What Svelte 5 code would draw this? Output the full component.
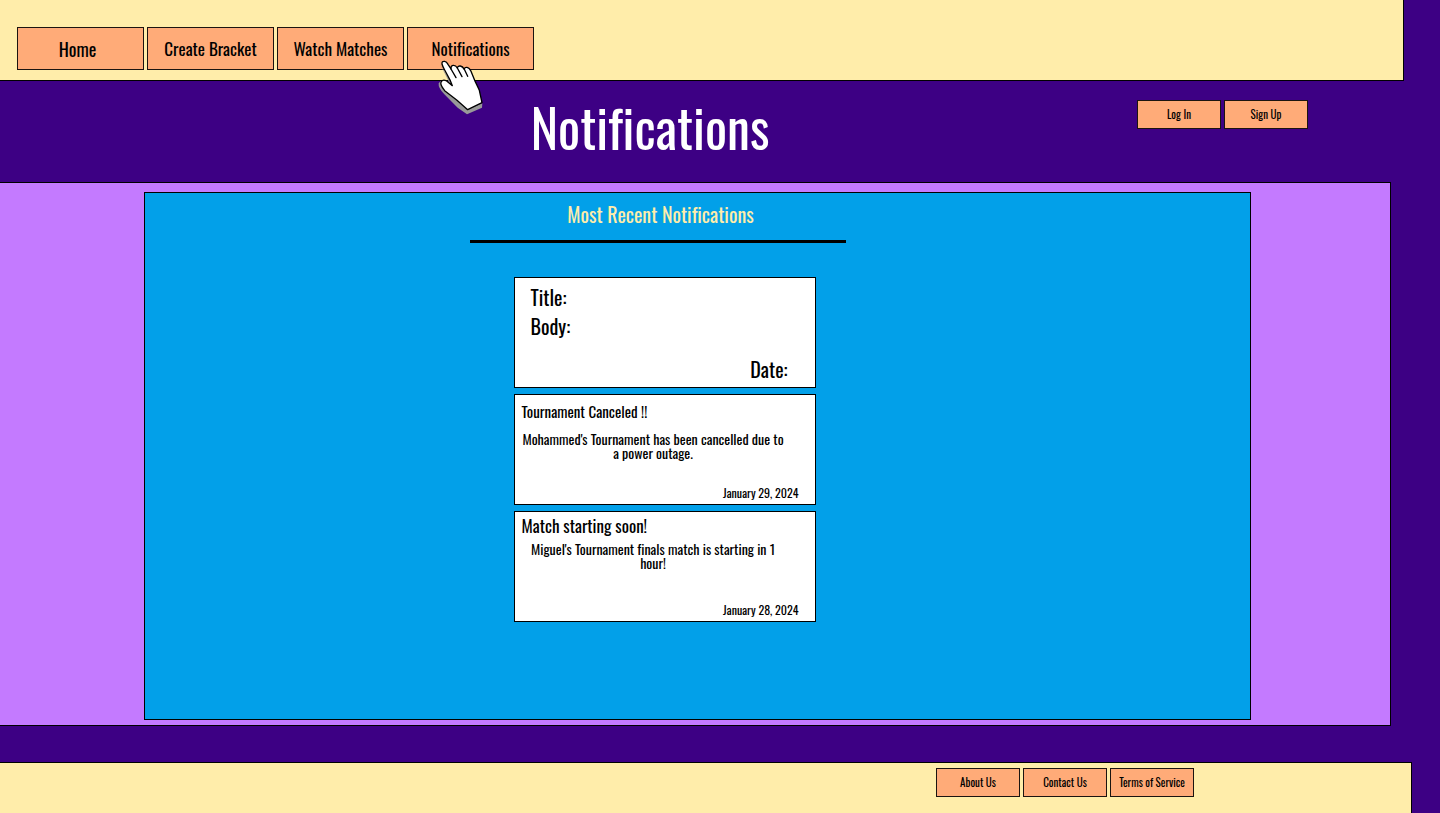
<script>
  const pages = ['Home', 'Create Bracket', 'Watch Matches', 'Notifications'];
  const account = ['Log In', 'Sign Up'];
  const info = ['About Us', 'Contact Us', 'Terms of Service'];
  const notifications = [
    {
      size: 'medium',
      title: 'Tournament Canceled !!',
      body: "Mohammed's Tournament has been cancelled due to a power outage.",
      date: 'January 29, 2024'
    },
    {
      size: 'large',
      title: 'Match starting soon!',
      body: "Miguel's Tournament finals match is starting in 1 hour!",
      date: 'January 28, 2024'
    }
  ];
</script>

<div class="page">
  <header class="topbar">
    <nav class="buttons">
      {#each pages as name}
        <div class="slot">
          <button class="nav-button" class:home={name === 'Home'}>{name}</button>
          {#if name === 'Notifications'}
            <svg class="pointer" viewBox="36 24 138 174" aria-hidden="true">
              <path
                d="M46 44 L68 88 L76 110 L62 96 Q48 88 41 100 Q39 114 58 133 L98 173 L126 193 L171 173 L172 160 L128 178 Z"
                fill="#999" />
              <path
                d="M51 42 Q50 33 59 34 Q65 35 69 43 L78 57 Q77 47 84 46 Q92 45 97 54 Q98 47 106 48 Q113 49 118 58 Q118 51 126 52 Q133 53 138 64 L149 91 Q156 105 163 121 L171 158 L128 179 L96 151 L59 122 Q43 102 49 95 Q54 87 65 93 L82 107 L76 92 L59 60 Q53 50 51 42 Z"
                fill="#fff"
                stroke="#000"
                stroke-width="4"
                stroke-linejoin="round" />
              <path
                d="M78 57 L93 83 M97 54 L111 80 M118 58 L128 79"
                fill="none"
                stroke="#000"
                stroke-width="4"
                stroke-linecap="round" />
            </svg>
          {/if}
        </div>
      {/each}
    </nav>
  </header>

  <div class="title-row">
    <h1>Notifications</h1>
    <div class="buttons account">
      {#each account as name}
        <button class="small-button">{name}</button>
      {/each}
    </div>
  </div>

  <main>
    <section class="panel">
      <h2>Most Recent Notifications</h2>
      <div class="cards">
        <article class="card sample">
          <h3>Title:</h3>
          <p>Body:</p>
          <div class="date">Date:</div>
        </article>
        {#each notifications as item}
          <article class="card {item.size}">
            <h3>{item.title}</h3>
            <p>{item.body}</p>
            <div class="date">{item.date}</div>
          </article>
        {/each}
      </div>
    </section>
  </main>

  <footer>
    <nav class="buttons">
      {#each info as name}
        <button class="small-button">{name}</button>
      {/each}
    </nav>
  </footer>
</div>

<style>
  :global(body) {
    margin: 0;
    background: #3d0084;
  }

  .page,
  .page * {
    box-sizing: border-box;
  }

  .page {
    display: flex;
    flex-direction: column;
    min-height: 100vh;
    font-family: Oswald, 'Liberation Sans Narrow', 'Arial Narrow', 'Liberation Sans', sans-serif;
    font-variant-ligatures: none;
    color: #000;
  }

  h1,
  h2,
  h3,
  p {
    margin: 0;
    font-weight: 400;
  }

  button {
    padding: 0;
    border: 1px solid #1c1410;
    background: #ffab78;
    color: #000;
    font-family: inherit;
    font-variant-ligatures: none;
    cursor: pointer;
  }

  .buttons {
    display: flex;
    gap: 3px;
  }

  .topbar {
    margin-right: 36px;
    padding: 27px 17px 10px;
    border: solid #000;
    border-width: 0 1px 1px 0;
    background: #ffedaa;
  }

  .slot {
    position: relative;
  }

  .nav-button {
    display: block;
    width: 127px;
    height: 43px;
    font-size: 17px;
  }

  .home {
    padding-right: 6px;
    font-size: 18px;
  }

  .pointer {
    position: absolute;
    top: 31px;
    left: 30px;
    width: 46px;
    height: 58px;
    pointer-events: none;
  }

  .title-row {
    display: grid;
    grid-template-columns: 1fr auto 1fr;
    height: 101px;
    padding-right: 132px;
  }

  h1 {
    grid-column: 2;
    margin: 16px 8px 0 0;
    color: #fff;
    font-size: 52px;
    line-height: 60px;
  }

  .account {
    justify-self: end;
    padding-top: 19px;
  }

  .small-button {
    width: 84px;
    height: 29px;
    padding-bottom: 2px;
    font-size: 11px;
  }

  main {
    display: flex;
    flex: 1;
    margin-right: 49px;
    padding: 9px 139px 5px 144px;
    border: solid #000;
    border-width: 1px 1px 1px 0;
    background: #c47aff;
  }

  .panel {
    display: flex;
    flex: 1;
    flex-direction: column;
    align-items: center;
    padding-right: 66px;
    border: 1px solid #000;
    background: #02a0e9;
  }

  h2 {
    width: 376px;
    height: 50px;
    margin-right: 14px;
    padding: 9px 0 0 6px;
    border-bottom: 3px solid #000;
    color: #ffedaa;
    font-size: 20px;
    line-height: 24px;
    text-align: center;
  }

  .cards {
    display: flex;
    flex-direction: column;
    gap: 6px;
    width: 302px;
    padding: 34px 0 24px;
  }

  .card {
    display: flex;
    flex-direction: column;
    min-height: 111px;
    padding: 6px 16px 2px 7px;
    border: 1px solid #000;
    background: #fff;
  }

  .card h3 {
    font-size: 15px;
    line-height: 20px;
  }

  .card p {
    margin: 11px 14px 0 0;
    font-size: 14px;
    line-height: 14px;
    text-align: center;
  }

  .date {
    margin-top: auto;
    font-size: 12px;
    line-height: 18px;
    text-align: right;
  }

  .large {
    padding-top: 4px;
  }

  .large h3 {
    font-size: 17px;
  }

  .large p {
    margin-top: 6px;
  }

  .sample {
    padding: 5px 27px 6px 16px;
  }

  .sample h3,
  .sample p,
  .sample .date {
    font-size: 20px;
    line-height: 29px;
    text-align: left;
  }

  .sample p {
    margin: 0;
  }

  .sample .date {
    text-align: right;
    line-height: 24px;
  }

  footer {
    display: flex;
    justify-content: flex-end;
    height: 51px;
    margin: 36px 28px 0 0;
    padding: 5px 217px 0 0;
    border: solid #000;
    border-width: 1px 1px 0 0;
    background: #ffedaa;
  }
</style>
